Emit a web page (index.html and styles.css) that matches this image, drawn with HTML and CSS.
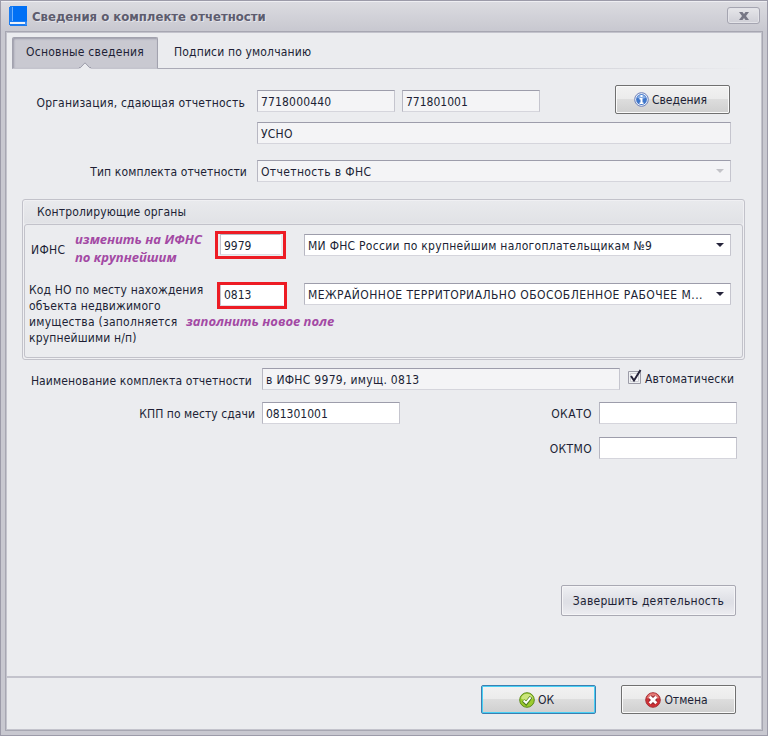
FILE: index.html
```html
<!DOCTYPE html>
<html lang="ru">
<head>
<meta charset="utf-8">
<title>Сведения о комплекте отчетности</title>
<link rel="stylesheet" href="styles.css">
</head>
<body>
<div class="window">
  <header class="titlebar">
    <svg class="book" width="18" height="20" viewBox="0 0 18 20" shape-rendering="crispEdges">
      <path fill="#1a7bf0" d="M1 0h17v20H1L0 19V1z"/>
      <path fill="#0070f5" d="M4 0h14v15H4z"/>
      <path fill="#6eb2ff" d="M3 1h1v14H3z"/>
      <path fill="#eef2f8" d="M1 16h15v2H1z"/>
      <path fill="#3b8df2" d="M16 16h2v3h-2z"/>
    </svg>
    <h1>Сведения о комплекте отчетности</h1>
    <button class="close"><svg width="10" height="8" viewBox="0 0 10 8"><path d="M0 0h3.500L5 2 6.500 0H10L7 4l3 4H6.500L5 6 3.500 8H0l3-4z" fill="#777785"/></svg></button>
  </header>
  <main class="panel">
    <nav class="tabs">
      <div class="tab active"><span class="ls25">Основные сведения</span>
        <svg class="notch" width="12" height="7" viewBox="0 0 12 7"><path d="M0 6.500h1L6 1l5 5.500h1V7H0z" fill="#ebecef"/><path d="M0 5.500h1.500L6 .8l4.500 4.700H12" fill="none" stroke="#9d9daa"/></svg>
      </div>
      <div class="tab"><span class="ls15">Подписи по умолчанию</span></div>
    </nav>
    <section class="form">
      <div class="row org">
        <label><span class="ls20">Организация, сдающая отчетность</span></label>
        <div class="field ro inn"><span class="ls15">7718000440</span></div>
        <div class="field ro kpp">771801001</div>
        <button class="btn gray info"><svg width="15" height="15" viewBox="0 0 15 15"><circle cx="7.500" cy="7.500" r="6.800" fill="#eef3fb" stroke="#6b7eb8"/><circle cx="7.500" cy="7.500" r="5.400" fill="#3f76ca"/><path d="M3 5.500a5 5 0 0 1 9 0c-2 1.500-6 2-9 0z" fill="#8bb0e5"/><path d="M6.500 3h2v2h-2zM5.500 6h3v4.500h1V12h-4v-1.500h1v-3h-1z" fill="#fff"/></svg><span>Сведения</span></button>
      </div>
      <div class="row name"><label></label><div class="field ro wide"><span class="ls25">УСНО</span></div></div>
      <div class="row type"><label><span class="ls12">Тип комплекта отчетности</span></label><div class="field ro wide"><span class="ls35">Отчетность в ФНС</span><i class="arrow dim"></i></div></div>

      <section class="group">
        <h2 class="ls15">Контролирующие органы</h2>
        <div class="groupbody">
          <div class="grow first">
            <span class="ifns ls35">ИФНС</span>
            <p class="note n1">изменить на ИФНС<br>по крупнейшим</p>
            <div class="mark m1"><div class="field code">9979</div></div>
            <div class="field combo c1"><span class="ls26">МИ ФНС России по крупнейшим налогоплательщикам №9</span><i class="arrow"></i></div>
          </div>
          <div class="grow second">
            <p class="codeno"><span class="ls15">Код НО по месту нахождения</span><br><span class="ls15">объекта недвижимого</span><br><span class="ls25">имущества (заполняется</span><br><span class="ls15">крупнейшими н/п)</span></p>
            <div class="mid">
              <div class="mark m2"><div class="field code">0813</div></div>
              <p class="note n2">заполнить новое поле</p>
            </div>
            <div class="field combo c2"><span class="ls44">МЕЖРАЙОННОЕ ТЕРРИТОРИАЛЬНО ОБОСОБЛЕННОЕ РАБОЧЕЕ М...</span><i class="arrow"></i></div>
          </div>
        </div>
      </section>

      <div class="row set"><label><span class="ls12">Наименование комплекта отчетности</span></label><div class="field ro setname"><span class="ls30">в ИФНС 9979, имущ. 0813</span></div>
        <div class="check"><svg width="15" height="16" viewBox="0 0 15 16"><path d="M.5 3.500h12v12H.5z" fill="#eef0f2" stroke="#9c9ca8"/><path d="M2.500 5.500h8v8h-8z" fill="#f8f8fa" stroke="#cfd0d6"/><path d="M3 8l3 4.500L12.500 2" fill="none" stroke="#25233a" stroke-width="2"/></svg><span class="ls15">Автоматически</span></div>
      </div>
      <div class="row place"><label><span class="ls05">КПП по месту сдачи</span></label><div class="field edit">081301001</div><label class="ok1"><span class="ls44">ОКАТО</span></label><div class="field edit"></div></div>
      <div class="row tmo"><label class="ok2"><span class="ls35">ОКТМО</span></label><div class="field edit"></div></div>
      <button class="btn finish"><span class="ls26">Завершить деятельность</span></button>
    </section>
    <footer>
      <button class="btn gray ok"><svg width="16" height="16" viewBox="0 0 16 16"><circle cx="8" cy="8" r="7.300" fill="#9bcb2e" stroke="#5d8c1c"/><path d="M2 6.500a6.200 6.200 0 0 1 12 0c-3 2-8 2-12 0z" fill="#cbe57c"/><path d="M4.300 8.500l2.800 2.800L12 5" fill="none" stroke="#4d7822" stroke-width="3.600"/><path d="M4.600 8.500l2.500 2.300 4.500-5.500" fill="none" stroke="#fff" stroke-width="1.900"/></svg><span>ОК</span></button>
      <button class="btn gray cancel"><svg width="16" height="16" viewBox="0 0 16 16"><circle cx="8" cy="8" r="7.300" fill="#cf3035" stroke="#a5343a"/><path d="M2 6a6.200 6.200 0 0 1 12 0c-3 2-8 2-12 0z" fill="#e47c78"/><path d="M5 5l6 6M11 5l-6 6" stroke="#8e2630" stroke-width="4.600"/><path d="M4.700 4.700l6.600 6.600M11.300 4.700l-6.600 6.600" stroke="#fff" stroke-width="2.800"/></svg><span>Отмена</span></button>
    </footer>
  </main>
</div>
</body>
</html>
```

FILE: styles.css
```css
* { box-sizing: border-box; margin: 0; padding: 0; }
body { width: 768px; height: 736px; overflow: hidden; font: 12px/16px "DejaVu Sans Condensed", "DejaVu Sans", sans-serif; font-stretch: condensed; color: #201f35; background: #c8c8d0; white-space: nowrap; }
button { font: inherit; color: inherit; }
svg { display: block; flex: none; }
.ls05 { letter-spacing: .06px; }
.ls12 { letter-spacing: .12px; }
.ls15 { letter-spacing: .16px; }
.ls20 { letter-spacing: .21px; }
.ls25 { letter-spacing: .25px; }
.ls26 { letter-spacing: .27px; }
.ls30 { letter-spacing: .3px; }
.ls35 { letter-spacing: .36px; }
.ls44 { letter-spacing: .44px; }
.window { width: 768px; height: 736px; border: 1px solid #9c9ba9; padding: 0 4px 4px; background: #c8c8d0; display: flex; flex-direction: column; }
.titlebar { height: 30px; flex: none; margin: 0 -4px; padding: 5px 7px 0 8px; display: flex; background: linear-gradient(#dcdce1, #c8c8d0); box-shadow: inset 0 1px #eeeef2; }
h1 { font-size: 13px; line-height: 16px; font-weight: bold; color: #5d5c6e; margin: 3px auto 0 5px; text-shadow: 1px 1px #e4e4ea; }
.close { width: 33px; height: 17px; margin-top: 1px; border: 1px solid #a5a5b1; border-radius: 3px; background: linear-gradient(#e6e6ea, #cfcfd6); box-shadow: inset 0 0 0 1px #e3e3e8; display: flex; align-items: center; justify-content: center; }
.panel { flex: 1; min-height: 0; border: 1px solid #a7a7b2; box-shadow: inset 0 0 0 1px #c3c3cc; background: #ebecef; display: flex; flex-direction: column; padding: 1px; }
.tabs { height: 32px; flex: none; margin: 4px 0 0 5px; width: 740px; display: flex; background: linear-gradient(90deg, #aaaab6 30%, #ebecef) bottom / 100% 1px no-repeat; }
.tab { padding: 7px 0 0 16px; }
.tab.active { position: relative; width: 146px; padding: 6px 0 0 13px; border: 1px solid #a2a2ae; border-bottom-color: #c4c4cd; border-radius: 2px 2px 0 0; background: #c9c9d1; box-shadow: inset 1px 1px 2px #9c9caa; }
.notch { position: absolute; left: 66px; bottom: -1px; }
.form { flex: 1; padding-left: 5px; }
.row { display: flex; height: 22px; align-items: flex-start; }
.row label { text-align: right; padding-top: 4px; flex: none; }
.field { height: 22px; flex: none; background: #fff; border: 1px solid; border-color: #9d9dab #c5c5ce #d5d5dc #b7b7c2; padding: 3px 3px 0; line-height: 16px; position: relative; }
.ro { background: #f4f4f6; }
.org { margin-top: 21px; }
.org label { width: 233px; padding-top: 5px; margin-right: 12px; }
.inn, .kpp { width: 138px; margin-right: 7px; }
.name { margin-top: 10px; }
.name label { width: 245px; }
.type { margin-top: 16px; }
.type label { width: 235px; margin-right: 10px; }
.wide { width: 474px; }
.arrow { position: absolute; right: 6px; top: 8px; border: 4px solid transparent; border-top-color: #26243b; border-bottom: 0; }
.dim { border-top-color: #c3c3c8; }
.btn { display: flex; align-items: center; justify-content: center; border: 1px solid #a9a9b3; border-radius: 2px; background: linear-gradient(#eff0f3, #dfe0e6 50%, #dfe0e6 60%, #ededf1); box-shadow: inset 0 0 0 1px #f5f5f7; flex: none; }
.gray { width: 115px; height: 29px; border-color: #707070; background: linear-gradient(#f2f2f2, #ebebeb 48%, #dddddd 49%, #cfcfcf); box-shadow: inset 0 0 0 1px #fafafa; padding-right: 4px; }
.btn svg { margin-right: 3px; }
.info { margin: -5px 0 0 68px; }
.group { width: 723px; height: 161px; margin: 17px 0 0 10px; border: 1px solid #c2c2ca; border-radius: 3px; background: linear-gradient(#e9eaed, #e1e2e6 23px, #ebecef 24px); padding: 0 1px 1px; display: flex; flex-direction: column; box-shadow: inset 0 0 0 1px #f0f0f3; }
h2 { font-size: 12px; font-weight: normal; line-height: 16px; height: 24px; padding: 4px 0 0 13px; flex: none; }
.groupbody { flex: 1; min-height: 0; border: 1px solid #c2c2ca; border-radius: 3px; }
.grow { display: flex; align-items: flex-start; }
.first { height: 57px; }
.ifns { width: 44px; padding: 17px 0 0 6px; }
.note { font: italic bold 13px/18px "Open Sans", sans-serif; color: #a349a4; }
.n1 { width: 146px; padding: 5px 0 0 6px; }
.mark { border: 3px solid #ed1c24; }
.m1 { width: 71px; height: 28px; margin: 6px 18px 0 0; padding: 0 2px; }
.m2 { width: 70px; height: 27px; margin-left: 27px; }
.code { width: auto; height: 21px; padding: 3px 3px 0; border-color: #b7b7c2 transparent #dedee4 #c4c4ce; }
.m2 .code { border-top: 0; padding-top: 2px; }
.combo { width: 427px; }
.c1 { margin-top: 9px; }
.codeno { width: 161px; margin-left: 4px; }
.mid { width: 114px; }
.n2 { margin: 3px 0 0 -4px; }
.c2 { margin-top: 1px; }
.set { margin-top: 8px; }
.set label { width: 240px; margin-right: 10px; padding-top: 5px; }
.setname { width: 358px; }
.check { display: flex; margin-left: 8px; }
.check span { margin: 3px 0 0 2px; }
.place { margin-top: 12px; }
.place label { width: 243px; margin-right: 7px; }
.edit { width: 138px; }
.place .ok1 { width: 192px; }
.tmo { margin-top: 13px; }
.tmo .ok2 { width: 580px; margin-right: 7px; }
.finish { width: 175px; height: 31px; margin: 126px 0 0 549px; }
footer { height: 53px; flex: none; border-top: 2px solid #c3c3cc; display: flex; padding: 7px 0 0 474px; gap: 25px; }
.ok { border-color: #3c7fb1; box-shadow: inset 0 0 0 1px #48d0f5; }
```
